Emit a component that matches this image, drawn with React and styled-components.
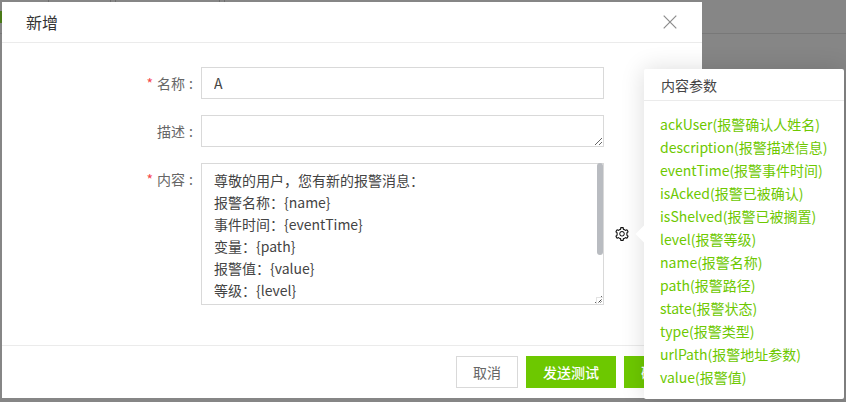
import React from 'react';
import styled, { createGlobalStyle } from 'styled-components';
import { AiOutlineSetting } from 'react-icons/ai';

const Global = createGlobalStyle`
  html, body { margin: 0; padding: 0; background: #868686; }
  body { width: 846px; height: 402px; overflow: hidden; font-family: "Noto Sans CJK SC", "Noto Sans", sans-serif; }
  * { box-sizing: border-box; }
`;
const Stage = styled.div`
  position: relative; width: 846px; height: 402px; overflow: hidden; background: #868686; padding: 2px 0 0 2px;
`;
const BackdropLine = styled.div`
  position: absolute; left: 0; right: 0; top: 33px; height: 1px; background: #787878;
`;
const BackdropTick = styled.div`
  position: absolute; top: 0; left: ${p => p.$x}px; width: 1px; height: 2px; background: #6e6e6e;
`;
const BackdropMark = styled.div`
  position: absolute; left: 0; top: 11px; width: 2px; height: 12px; background: #4a7a18;
`;
const Modal = styled.div`
  position: relative; width: 700px; height: 396px; background: #fff; display: flex; flex-direction: column;
`;
const Header = styled.div`
  height: 41px; flex: none; display: flex; align-items: center; justify-content: space-between;
  padding: 0 25px 0 24px; border-bottom: 1px solid #ebebeb;
`;
const Title = styled.div`font-size: 16px; color: #333;`;
const CloseBtn = styled.div`
  width: 14px; height: 14px; color: #8c8c8c; display: flex;
`;
const Body = styled.div`
  flex: 1; padding: 24px 0 0; display: flex; flex-direction: column; gap: 16px;
`;
const Row = styled.div`display: flex; align-items: flex-start;`;
const Label = styled.label`
  width: 199px; flex: none; display: flex; justify-content: flex-end; font-size: 14px; line-height: 32px; height: 32px; color: #666;
`;
const Star = styled.span`color: #f5484d; margin-right: 4px;`;
const Colon = styled.span`margin: 0 8px 0 4px;`;
const Input = styled.input`
  width: 403px; height: 32px; border: 1px solid #d9d9d9; border-radius: 0; outline: none; margin: 0;
  font: 14px/30px "Noto Sans CJK SC", "Noto Sans", sans-serif; padding: 0 12px; color: #444; background: #fff;
`;
const AreaWrap = styled.div`position: relative; width: 403px; height: ${p => p.$h}px;`;
const Area = styled.textarea`
  display: block; width: 100%; height: 100%; border: 1px solid #d9d9d9; border-radius: 0; outline: none; margin: 0;
  font: 14px/22px "Noto Sans CJK SC", "Noto Sans", sans-serif; color: #444; padding: 5px 12px; background: #fff;
  resize: vertical; overflow: hidden;
`;
const Thumb = styled.div`
  position: absolute; right: 1px; top: 0; width: 6px; height: 92px; border-radius: 3px; background: #b9bcc1;
`;
const Corner = styled.div`
  position: absolute; right: 1px; bottom: 1px; width: 7px; height: 7px; background: #fff;
  border-left: 1px solid #e3e3e3; border-top: 1px solid #e3e3e3;
`;
const CornerMark = styled.svg`position: absolute; right: 1px; bottom: 1px; width: 4px; height: 4px;`;
const Gear = styled.div`
  position: absolute; left: 612px; top: 224px; width: 16px; height: 16px; color: #111; display: flex;
`;
const Footer = styled.div`
  height: 53px; flex: none; border-top: 1px solid #ebebeb; padding: 10px 16px 0 0; display: flex; justify-content: flex-end; gap: 8px;
`;
const Btn = styled.div`
  height: 32px; width: ${p => p.$w}px; display: flex; align-items: center; justify-content: center; font-size: 14px; flex: none;
  font-weight: ${p => p.$ghost ? 400 : 500};
  background: ${p => p.$ghost ? '#fff' : '#6dc800'}; color: ${p => p.$ghost ? '#666' : '#fff'};
  border: ${p => p.$ghost ? '1px solid #d9d9d9' : 'none'};
`;
const Popover = styled.div`
  position: absolute; left: 644px; top: 69px; width: 200px; height: 330px; background: #fff;
  box-shadow: 0 0 24px rgba(0,0,0,.14); border-radius: 2px; color: #333;
`;
const Arrow = styled.div`
  position: absolute; left: -6px; top: 159px; width: 12px; height: 12px; transform: rotate(45deg); background: #fff;
`;
const PopTitle = styled.div`
  position: relative; height: 32px; padding: 0 17px; font-size: 14px; line-height: 32px; border-bottom: 1px solid #ebebeb; color: #444;
`;
const PopList = styled.div`
  position: relative; padding: 12px 16px 0; display: flex; flex-direction: column;
`;
const Param = styled.div`font-size: 14px; line-height: 23px; height: 23px; color: #6dc800; white-space: nowrap;`;

const params = ['ackUser(报警确认人姓名)','description(报警描述信息)','eventTime(报警事件时间)','isAcked(报警已被确认)','isShelved(报警已被搁置)','level(报警等级)','name(报警名称)','path(报警路径)','state(报警状态)','type(报警类型)','urlPath(报警地址参数)','value(报警值)'];
const content = '尊敬的用户，您有新的报警消息：\n报警名称：{name}\n事件时间：{eventTime}\n变量：{path}\n报警值：{value}\n等级：{level}\n\n\n\n';

export default function App() {
  return (
    <Stage>
      <Global />
      <BackdropLine />
      <BackdropMark />
      {[48, 110, 115, 219, 224].map(x => <BackdropTick key={x} $x={x} />)}
      <Modal>
        <Header>
          <Title>新增</Title>
          <CloseBtn>
            <svg viewBox="0 0 14 14" width="14" height="14" fill="none" stroke="currentColor" strokeWidth="1.2"><path d="M.7.7l12.6 12.6M13.3.7L.7 13.3"/></svg>
          </CloseBtn>
        </Header>
        <Body>
          <Row><Label><Star>*</Star>名称<Colon>:</Colon></Label><Input readOnly value="A" /></Row>
          <Row><Label>描述<Colon>:</Colon></Label><AreaWrap $h={32}><Area readOnly value="" /></AreaWrap></Row>
          <Row>
            <Label><Star>*</Star>内容<Colon>:</Colon></Label>
            <AreaWrap $h={142}>
              <Area readOnly value={content} />
              <Thumb />
              <Corner><CornerMark viewBox="0 0 4 4"><path d="M3.5.5L.5 3.5M3.5 2.5L2.5 3.5" stroke="#444" strokeWidth="1" /></CornerMark></Corner>
            </AreaWrap>
          </Row>
        </Body>
        <Footer>
          <Btn $ghost $w={62}>取消</Btn>
          <Btn $w={90}>发送测试</Btn>
          <Btn $w={62}>确定</Btn>
        </Footer>
        <Gear><AiOutlineSetting size={16} /></Gear>
      </Modal>
      <Popover>
        <Arrow />
        <PopTitle>内容参数</PopTitle>
        <PopList>{params.map(p => <Param key={p}>{p}</Param>)}</PopList>
      </Popover>
    </Stage>
  );
}
